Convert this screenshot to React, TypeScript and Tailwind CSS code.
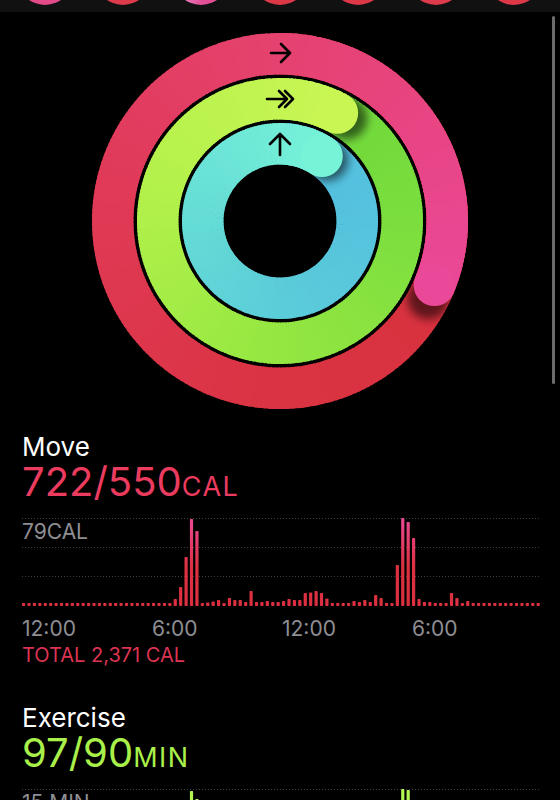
import React from 'react';

const CX = 280;
const CY = 221;

type Stop = [number, string];

function hexToRgb(c: string) {
  return [1, 3, 5].map((i) => parseInt(c.slice(i, i + 2), 16));
}

function colorAt(stops: Stop[], t: number) {
  for (let i = 1; i < stops.length; i++) {
    if (t <= stops[i][0]) {
      const [t0, c0] = stops[i - 1];
      const [t1, c1] = stops[i];
      const k = Math.max(0, Math.min(1, (t - t0) / (t1 - t0)));
      const a = hexToRgb(c0);
      const b = hexToRgb(c1);
      return `rgb(${a.map((v, j) => Math.round(v + (b[j] - v) * k)).join(',')})`;
    }
  }
  return stops[stops.length - 1][1];
}

function pt(r: number, deg: number) {
  const rad = ((deg - 90) * Math.PI) / 180;
  return [CX + r * Math.cos(rad), CY + r * Math.sin(rad)];
}

function arcPath(r: number, a0: number, a1: number) {
  const [x0, y0] = pt(r, a0);
  const [x1, y1] = pt(r, a1);
  const large = a1 - a0 > 180 ? 1 : 0;
  return `M${x0.toFixed(2)} ${y0.toFixed(2)}A${r} ${r} 0 ${large} 1 ${x1.toFixed(2)} ${y1.toFixed(2)}`;
}

function annulus(r1: number, r2: number) {
  const c = (r: number) =>
    `M${CX - r} ${CY}a${r} ${r} 0 1 0 ${2 * r} 0a${r} ${r} 0 1 0 ${-2 * r} 0Z`;
  return c(r2) + c(r1);
}

interface RingProps {
  id: string;
  r: number;
  w: number;
  over: number;
  stops: Stop[];
}

function Ring({ id, r, w, over, stops }: RingProps) {
  const total = 360 + over;
  const step = 1.5;
  const base = [];
  for (let a = 0; a < 360; a += step) {
    base.push(
      <path
        key={a}
        d={arcPath(r, a, Math.min(a + step + 0.6, 359.9))}
        stroke={colorAt(stops, (a + step / 2) / total)}
        strokeWidth={w}
        fill="none"
      />
    );
  }
  // the lap past 100% sits on top, starting a touch early so no seam shows
  const top = [];
  for (let a = 0; a < over; a += step) {
    top.push(
      <path
        key={a}
        d={arcPath(r, a === 0 ? -1.2 : a, Math.min(a + step + 0.6, over))}
        stroke={colorAt(stops, (360 + a + step / 2) / total)}
        strokeWidth={w}
        fill="none"
      />
    );
  }
  const [ex, ey] = pt(r, over);
  const [sx, sy] = pt(r, over + 5);
  return (
    <g>
      <clipPath id={`clip-${id}`}>
        <path d={annulus(r - w / 2, r + w / 2)} clipRule="evenodd" />
      </clipPath>
      {base}
      <g clipPath={`url(#clip-${id})`}>
        <circle cx={sx} cy={sy} r={w / 2} fill="#000" opacity={0.55} filter="url(#soft)" />
      </g>
      {top}
      <circle cx={ex} cy={ey} r={w / 2} fill={colorAt(stops, 1)} />
    </g>
  );
}

function Rings() {
  return (
    <svg width="560" height="412" viewBox="0 12 560 412" className="block">
      <defs>
        <filter id="soft" x="-50%" y="-50%" width="200%" height="200%">
          <feGaussianBlur stdDeviation="4" />
        </filter>
      </defs>
      <Ring
        id="move"
        r={167.25}
        w={41.5}
        over={112.6}
        stops={[
          [0, '#d42e38'],
          [0.38, '#da3342'],
          [0.6, '#e03a58'],
          [0.76, '#e5426f'],
          [1, '#ea4898'],
        ]}
      />
      <Ring
        id="exercise"
        r={122.25}
        w={41.5}
        over={28}
        stops={[
          [0, '#6bd53a'],
          [0.23, '#7bde3e'],
          [0.46, '#94e641'],
          [0.7, '#b0f04a'],
          [1, '#caf654'],
        ]}
      />
      <Ring
        id="stand"
        r={77.25}
        w={41.5}
        over={33}
        stops={[
          [0, '#52bde0'],
          [0.23, '#56c3de'],
          [0.46, '#5bcdd9'],
          [0.69, '#65dcd6'],
          [1, '#77f3d8'],
        ]}
      />
      <g stroke="#000" strokeWidth="2.6" fill="none" strokeLinecap="round" strokeLinejoin="round">
        <path d="M271 53H290M281 44L290 53L281 62" />
        <path d="M267 99H287M279 91L287 99L279 107M285 91L293 99L285 107" />
        <path d="M280 155V134M270 144L280 134L290 144" />
      </g>
    </svg>
  );
}

const PITCH = 130 / 24;

function BarChart({ id, bars, from, to }: { id: string; bars: number[]; from: string; to: string }) {
  return (
    <svg width="560" height="96" viewBox="0 512 560 96" className="block">
      <defs>
        <linearGradient id={id} gradientUnits="userSpaceOnUse" x1="0" y1="604" x2="0" y2="516">
          <stop offset="0" stopColor={from} />
          <stop offset="0.45" stopColor={from} />
          <stop offset="1" stopColor={to} />
        </linearGradient>
      </defs>
      <g stroke="#3f3f3f" strokeWidth="1" strokeDasharray="1 2">
        <path d="M22 516.5H540" />
        <path d="M22 545.5H540" />
        <path d="M22 574.5H540" />
      </g>
      {bars.map((h, i) => (
        <rect
          key={i}
          x={22 + i * PITCH}
          y={604 - h}
          width="3.2"
          height={h}
          rx="0.8"
          fill={`url(#${id})`}
        />
      ))}
    </svg>
  );
}

const moveBars = (() => {
  const b = new Array(96).fill(3);
  const set: Record<number, number> = {
    28: 7, 29: 19, 30: 49, 31: 87, 32: 75, 34: 3.5, 35: 4.5, 36: 6, 38: 8, 39: 6,
    40: 6, 41: 4, 42: 15, 43: 4, 44: 4, 45: 5, 46: 4, 47: 4, 48: 5, 49: 7, 50: 6,
    51: 6, 52: 13, 53: 13.5, 54: 15, 55: 13, 56: 7.5, 61: 5, 62: 4, 63: 6, 64: 4,
    65: 11, 66: 8, 69: 41, 70: 88, 71: 84, 72: 68, 73: 7, 74: 4, 75: 4, 79: 13,
    80: 8, 82: 5,
  };
  Object.entries(set).forEach(([k, v]) => (b[Number(k)] = v));
  return b;
})();

const exerciseBars = (() => {
  const b = new Array(96).fill(3);
  b[31] = 86;
  b[32] = 78;
  b[70] = 88;
  b[71] = 87;
  return b;
})();

interface SectionProps {
  id: string;
  title: string;
  value: string;
  unit: string;
  color: string;
  max: string;
  bars: number[];
  from: string;
  to: string;
  total?: string;
}

function Section({ id, title, value, unit, color, max, bars, from, to, total }: SectionProps) {
  return (
    <div className="flex flex-col">
      <div className="pl-[22px] text-[26px] leading-[28px] text-white">{title}</div>
      <div className={`pl-[22px] text-[40px] leading-[42px] ${color}`}>
        {value}
        <span className="text-[27px] tracking-[1.5px]">{unit}</span>
      </div>
      <div className="relative mt-[5.5px]">
        <BarChart id={id} bars={bars} from={from} to={to} />
        <div className="absolute left-[22px] top-[6px] text-[21px] leading-[24px] text-[#8e8e93]">
          {max}
        </div>
      </div>
      <div className="mt-[7.5px] flex pl-[22px] text-[21px] leading-[24px] text-[#8e8e93]">
        <span className="w-[130px]">12:00</span>
        <span className="w-[130px]">6:00</span>
        <span className="w-[130px]">12:00</span>
        <span className="w-[130px]">6:00</span>
      </div>
      {total && (
        <div className="mt-[2px] pl-[22px] text-[20px] leading-[24px] text-[#dc3352]">{total}</div>
      )}
    </div>
  );
}

const dayColors = [
  'bg-[#e24a8a]',
  'bg-[#dd3a4c]',
  'bg-[linear-gradient(90deg,#e99ad3_0%,#e35098_50%,#e2468e_100%)]',
  'bg-[#dc3848]',
  'bg-[#dc3848]',
  'bg-[#dd3a4c]',
  'bg-[#dc3848]',
];

export default function App() {
  return (
    <div className="relative h-[800px] w-[560px] overflow-hidden bg-black font-[Inter,'Noto_Sans',sans-serif]">
      <div className="flex h-[12px] gap-[22.2px] overflow-hidden bg-[#111111] pl-[17px]">
        {dayColors.map((c, i) => (
          <div key={i} className={`-mt-[51px] h-[56px] w-[56px] shrink-0 rounded-full ${c}`} />
        ))}
      </div>

      <Rings />

      <div className="mt-[9px]">
        <Section
          id="moveGrad"
          title="Move"
          value="722/550"
          unit="CAL"
          color="text-[#eb3b5f]"
          max="79CAL"
          bars={moveBars}
          from="#dc3040"
          to="#ea4a95"
          total="TOTAL 2,371 CAL"
        />
        <div className="mt-[37px]">
          <Section
            id="exGrad"
            title="Exercise"
            value="97/90"
            unit="MIN"
            color="text-[#a9f14a]"
            max="15 MIN"
            bars={exerciseBars}
            from="#9ded46"
            to="#b6f552"
          />
        </div>
      </div>

      <div className="absolute left-[552px] top-[16px] h-[368px] w-[3px] rounded-full bg-[#6b6b6b]" />
    </div>
  );
}
